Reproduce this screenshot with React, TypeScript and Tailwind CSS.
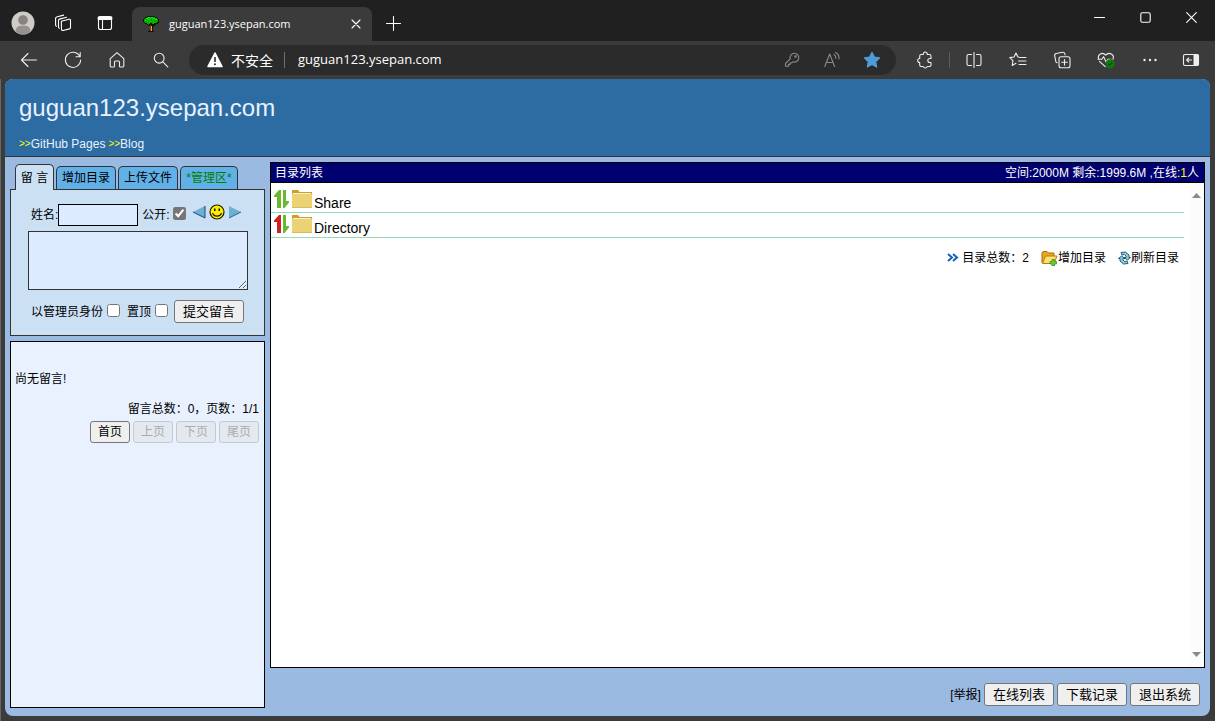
import type { ButtonHTMLAttributes, ReactNode } from "react";

type IconProps = { children: ReactNode; className?: string; size?: number; box?: string };

function Icon({ children, className = "", size = 18, box = "0 0 18 18" }: IconProps) {
  return (
    <svg
      width={size}
      height={size}
      viewBox={box}
      fill="none"
      stroke="currentColor"
      strokeWidth="1.1"
      strokeLinecap="round"
      strokeLinejoin="round"
      className={`shrink-0 ${className}`}
      aria-hidden="true"
    >
      {children}
    </svg>
  );
}

function ToolButton({ label, className = "w-11", children }: { label: string; className?: string; children: ReactNode }) {
  return (
    <button type="button" aria-label={label} className={`flex h-full shrink-0 items-center justify-center ${className}`}>
      {children}
    </button>
  );
}

function TreeIcon() {
  return (
    <svg width="16" height="16" viewBox="0 0 16 16" shapeRendering="crispEdges" className="shrink-0" aria-hidden="true">
      <path fill="#001800" d="M4 0h8v1h2v1h1v1h1v4h-1v1h-2v1h-2v1H5V8H2V7H1V6H0V3h1V2h1V1h2z" />
      <path fill="#00a800" d="M4 1h8v1h2v1h1v3h-1v1h-3v1H9V7H7v1H4V7H2V6H1V3h1V2h2z" />
      <path fill="#20e020" d="M5 1h2v1H5zM8 1h2v1H8zM3 2h2v1H3zM7 2h1v1H7zM10 2h2v1h-2zM2 4h1v1H2zM5 3h2v1H5zM9 3h1v1H9zM12 3h2v1h-2zM4 5h1v1H4zM7 5h1v1H7zM10 5h1v1h-1z" />
      <path fill="#111" d="M4 9h2v1h1v4H6v1H5v1h6v-1h-1v-4h1v-1h1V9h1V8h-2v1h-1v1H8V9H6V8H4z" />
      <path fill="#a33a16" d="M7 9h1v6H7zM5 8h1v1H5z" />
      <path fill="#d6a23c" d="M8 10h1v5H8z" />
    </svg>
  );
}

function BrowserTabs() {
  return (
    <div className="flex h-[41px] shrink-0 items-end bg-[#202020] text-white">
      <div className="flex h-9 items-center">
        <button type="button" aria-label="Profile" className="flex w-[45px] justify-center">
          <svg width="24" height="24" viewBox="0 0 24 24" aria-hidden="true">
            <circle cx="12" cy="12" r="11.5" fill="#cfccc8" />
            <path d="M4.5 20.5C4.500 15.500 8 14.500 12 14.500s7.500 1 7.500 6A11.500 11.500 0 0 1 4.500 20.500z" fill="#96928e" />
            <circle cx="12" cy="9" r="5.200" fill="#87837f" stroke="#cfccc8" strokeWidth=".7" />
          </svg>
        </button>
        <button type="button" aria-label="Workspaces" className="flex w-9 justify-center">
          <Icon>
            <path d="M7.300 7.200 15 5.200a1.200 1.200 0 0 1 1.500 1.200v7.200a1.300 1.300 0 0 1-1 1.300L9 16.500a1.200 1.200 0 0 1-1.500-1.200z" />
            <path d="M5.300 14.300a1.500 1.500 0 0 1-.8-1.300V6.400a1.400 1.400 0 0 1 1-1.300l7-1.900" />
            <path d="M2.400 12.200a1.500 1.500 0 0 1-.8-1.300V4.300a1.400 1.400 0 0 1 1-1.300l7-1.900" />
          </Icon>
        </button>
        <button type="button" aria-label="Tab actions" className="flex w-12 justify-center">
          <Icon size={16} box="0 0 16 16">
            <rect x="1.500" y="1.500" width="13" height="13" rx="2" />
            <path d="M1.500 2.500h13M1.500 4h13" strokeWidth="1.800" />
            <path d="M5.500 4.500v10" />
          </Icon>
        </button>
      </div>
      <div className="ml-[3px] flex h-[34px] w-60 items-center rounded-t-lg bg-[#3b3b3b] pl-[11px] pr-2">
        <TreeIcon />
        <span className="ml-2.5 flex-1 font-['Open_Sans','Noto_Sans',sans-serif] text-[11px]">guguan123.ysepan.com</span>
        <button type="button" aria-label="Close tab" className="flex size-4 items-center justify-center">
          <Icon size={10} box="0 0 10 10">
            <path d="m1 1 8 8M9 1 1 9" />
          </Icon>
        </button>
      </div>
      <button type="button" aria-label="New tab" className="flex h-[34px] w-[42px] items-center justify-center pb-px">
        <Icon size={15} box="0 0 15 15">
          <path d="M7.500 .5v14M.5 7.500h14" />
        </Icon>
      </button>
      <div className="ml-auto flex h-full items-start pr-px">
        <button type="button" aria-label="Minimize" className="flex h-[34px] w-[46px] items-center justify-center">
          <Icon size={11} box="0 0 11 11"><path d="M.5 5.500h10" /></Icon>
        </button>
        <button type="button" aria-label="Maximize" className="flex h-[34px] w-[46px] items-center justify-center">
          <Icon size={11} box="0 0 11 11"><rect x=".8" y=".8" width="9.400" height="9.400" rx="1.500" /></Icon>
        </button>
        <button type="button" aria-label="Close" className="flex h-[34px] w-[46px] items-center justify-center">
          <Icon size={11} box="0 0 11 11"><path d="m.7.7 9.600 9.600m0-9.600L.7 10.300" /></Icon>
        </button>
      </div>
    </div>
  );
}

function BrowserToolbar() {
  return (
    <div className="flex h-[38px] shrink-0 items-center bg-[#3b3b3b] pl-[7px] pr-[5px] text-[#eeeeee]">
      <ToolButton label="Back">
        <Icon><path d="M16.500 9H1.500M8 2.500 1.500 9 8 15.500" /></Icon>
      </ToolButton>
      <ToolButton label="Refresh">
        <Icon><path d="M15.700 5.200A7.600 7.600 0 1 0 16.600 9M16.200 1.500v4.200H12" /></Icon>
      </ToolButton>
      <ToolButton label="Home">
        <Icon><path d="M2.200 7.600 9 1.700l6.800 5.900v7.200a1.200 1.200 0 0 1-1.200 1.200h-2.300a.8.8 0 0 1-.8-.8V11a1 1 0 0 0-1-1h-3a1 1 0 0 0-1 1v4.200a.8.8 0 0 1-.8.8H3.400a1.200 1.200 0 0 1-1.200-1.200z" /></Icon>
      </ToolButton>
      <ToolButton label="Search">
        <Icon><circle cx="7.200" cy="7.200" r="4.900" /><path d="m10.800 10.800 5 5" /></Icon>
      </ToolButton>
      <div className="ml-1.5 flex h-[30px] min-w-0 flex-1 items-center rounded-full bg-[#2b2b2b] pl-[17px] pr-1">
        <svg width="18" height="18" viewBox="0 0 18 18" className="shrink-0" aria-hidden="true">
          <path d="M9 2 16 15.500H2z" fill="#fff" stroke="#fff" strokeWidth="1.600" strokeLinejoin="round" />
          <path d="M9 6v5" stroke="#2b2b2b" strokeWidth="1.600" />
          <circle cx="9" cy="13.200" r="1" fill="#2b2b2b" />
        </svg>
        <span className="ml-[7px] shrink-0 font-['Noto_Sans_CJK_SC',sans-serif] text-sm leading-5 text-white">不安全</span>
        <span className="ml-[11px] mr-[13px] h-4 w-px shrink-0 bg-[#707070]" />
        <input
          aria-label="Address"
          defaultValue="guguan123.ysepan.com"
          className="min-w-0 flex-1 bg-transparent font-['Open_Sans','Noto_Sans',sans-serif] text-[13px] text-white outline-none"
        />
        <ToolButton label="Passwords" className="w-10 text-[#8a8a8a]">
          <Icon size={16} box="0 0 16 16">
            <path d="M10.300 1.300a4.400 4.400 0 1 1-1.500 8.500L7.500 11H6v1.600H4.400v1.600H1.500v-2.700l4.700-4.600a4.400 4.400 0 0 1 4.100-5.600z" />
            <circle cx="11.500" cy="4.500" r=".8" />
          </Icon>
        </ToolButton>
        <ToolButton label="Read aloud" className="w-10 text-[#8a8a8a]">
          <Icon>
            <path d="M1.800 15.500 6.700 3l4.900 12.500M3.400 11.500H10M11 3.500a4 4 0 0 1 1.800 4M12.500 1.500A6.500 6.500 0 0 1 16 8" />
          </Icon>
        </ToolButton>
        <ToolButton label="Favorite" className="w-10 text-[#4f9bd9]">
          <Icon>
            <path fill="currentColor" d="m9 1.200 2.400 4.900 5.300.8-3.900 3.800.9 5.400L9 13.500l-4.700 2.600.9-5.400-3.900-3.800 5.300-.8z" />
          </Icon>
        </ToolButton>
      </div>
      <ToolButton label="Extensions" className="ml-[7px] w-11">
        <Icon>
          <path d="M5.200 3.500h2.100a2 2 0 1 1 3.900 0h2.300A1.500 1.500 0 0 1 15 5v2.500h-1.200a2 2 0 0 0 0 4H15V14a1.500 1.500 0 0 1-1.500 1.500h-2.300a2 2 0 0 1-3.900 0H5.200A1.500 1.500 0 0 1 3.700 14v-2.500a2 2 0 1 1 0-4V5a1.500 1.500 0 0 1 1.500-1.500z" />
        </Icon>
      </ToolButton>
      <span className="mx-0.5 h-4 w-px shrink-0 bg-[#5c5c5c]" />
      <ToolButton label="Split screen">
        <Icon>
          <path d="M6.500 3.500h-3A1.500 1.500 0 0 0 2 5v8a1.500 1.500 0 0 0 1.500 1.500h3M11.500 3.500h3A1.500 1.500 0 0 1 16 5v8a1.500 1.500 0 0 1-1.500 1.500h-3M9 1.500v15" />
        </Icon>
      </ToolButton>
      <ToolButton label="Favorites list">
        <Icon>
          <path d="M10 6.300 8.800 5.800 7 2 5 6l-4.200.6 3.100 3L3.200 14.500 7 12.300M11 6.500h6M9.500 10H17M10 13.500h7" />
        </Icon>
      </ToolButton>
      <ToolButton label="Collections">
        <Icon>
          <path d="M4 11.800a2 2 0 0 1-1.200-1.500L1.700 4.800A2 2 0 0 1 3.300 2.500l6.200-1.200A2 2 0 0 1 11.900 3l.2 1" />
          <rect x="6" y="5.800" width="11" height="11" rx="2" />
          <path d="M11.500 8.500v5.600M8.700 11.300h5.600" />
        </Icon>
      </ToolButton>
      <ToolButton label="Browser essentials">
        <Icon>
          <path d="M1.800 8.200C-.2 3.500 5.500.3 8.700 4.200c3.200-3.900 9.300-.7 7.200 4M2.500 10.300l5.700 5.400M1 8.300h3.800L6.600 5.700l2.700 5.500 1.600-3h3" />
          <circle cx="13.200" cy="12.700" r="4" fill="#0f7b0f" stroke="#0f7b0f" />
          <path d="m11.500 13 1.200 1.100 2.300-2.400" stroke="#063f06" />
        </Icon>
      </ToolButton>
      <ToolButton label="Settings and more">
        <Icon><g fill="currentColor" stroke="none"><circle cx="3.500" cy="9" r="1.200" /><circle cx="9" cy="9" r="1.200" /><circle cx="14.500" cy="9" r="1.200" /></g></Icon>
      </ToolButton>
      <ToolButton label="Sidebar" className="w-[38px]">
        <Icon>
          <rect x="1.500" y="3.500" width="15" height="11" rx="1.500" />
          <path fill="currentColor" stroke="none" d="M11.500 3.500h5v11h-5z" />
          <path d="M9.500 9H4.800M6.700 7 4.700 9l2 2" />
        </Icon>
      </ToolButton>
    </div>
  );
}

function FormButton({ className = "h-[23px] px-2 text-[13px]", ...rest }: ButtonHTMLAttributes<HTMLButtonElement>) {
  return (
    <button
      type="button"
      {...rest}
      className={`flex shrink-0 items-center justify-center whitespace-nowrap rounded-[3px] border border-[#767676] bg-[#efefef] leading-none text-black disabled:border-[#c5cad1] disabled:bg-[#e4e9f0] disabled:text-[#a8acb2] ${className}`}
    />
  );
}

const sideTabs = [
  { label: "增加目录", tone: "text-black", width: "w-[60px]" },
  { label: "上传文件", tone: "text-black", width: "w-[60px]" },
  { label: "*管理区*", tone: "text-[#008000]", width: "w-[58px]" },
];

function Smiley() {
  return (
    <svg width="16" height="16" viewBox="0 0 16 16" aria-hidden="true">
      <circle cx="8" cy="8" r="7" fill="#ffee00" stroke="#1a1a00" strokeWidth="1.200" />
      <path d="M5 4.500h1.500V7H5zM9.500 4.500H11V7H9.500z" fill="#111" />
      <path d="M3.500 9c1.500 4.200 7.500 4.200 9 0" fill="none" stroke="#111" strokeWidth="1.100" />
    </svg>
  );
}

function MessageForm() {
  return (
    <section>
      <div role="tablist" className="flex items-end gap-0.5 pl-[5px]">
        <button type="button" role="tab" aria-selected="true" className="relative -mb-px h-[26px] w-[39px] rounded-t-[5px] border border-b-0 border-[#333333] bg-[#cce0f4]">
          留 言
        </button>
        {sideTabs.map((t) => (
          <button key={t.label} type="button" role="tab" aria-selected="false" className={`h-[23px] rounded-t-[5px] border border-b-0 border-[#333333] bg-[#62b0e8] ${t.width} ${t.tone}`}>
            {t.label}
          </button>
        ))}
      </div>
      <form className="border border-[#333333] bg-[#cce0f4] pb-3 pl-[17px] pr-4 pt-3.5">
        <div className="flex h-[22px] items-center pl-[3px]">
          <label htmlFor="name">姓名:</label>
          <input id="name" className="h-[22px] w-20 border border-black bg-[#dcebff] px-1 outline-none" />
          <label htmlFor="public" className="ml-1">公开:</label>
          <input id="public" type="checkbox" defaultChecked className="mb-1 ml-[3px] size-[13px] accent-[#767676]" />
          <div className="mb-1.5 ml-1.5 flex items-center gap-[3px]">
            <button type="button" aria-label="上一个表情">
              <svg width="14" height="14" viewBox="0 0 14 14" aria-hidden="true"><path d="M13 1v12L1 7z" fill="#6fb0cc" /><path d="M1 7l12 6V1" fill="none" stroke="#17459b" /></svg>
            </button>
            <button type="button" aria-label="选择表情"><Smiley /></button>
            <button type="button" aria-label="下一个表情">
              <svg width="14" height="14" viewBox="0 0 14 14" aria-hidden="true"><path d="M1 1v12l12-6z" fill="#6fb0cc" /><path d="M1 13l12-6" fill="none" stroke="#2a62a8" /></svg>
            </button>
          </div>
        </div>
        <textarea aria-label="留言内容" className="mt-[5px] block h-[59px] w-full border border-[#333333] bg-[#dcebff] outline-none" />
        <div className="mt-2.5 flex items-center pl-[3px]">
          <label htmlFor="admin">以管理员身份</label>
          <input id="admin" type="checkbox" className="mb-0.5 ml-1 size-[13px]" />
          <label htmlFor="top" className="ml-[7px]">置顶</label>
          <input id="top" type="checkbox" className="mb-0.5 ml-1 mr-1.5 size-[13px]" />
          <FormButton>提交留言</FormButton>
        </div>
      </form>
    </section>
  );
}

function MessageList() {
  return (
    <section className="mt-[5px] flex-1 border border-black bg-[#e9f1ff] pl-1 pr-[5px] pt-7">
      <p className="leading-[18px]">尚无留言!</p>
      <p className="mt-3 text-right leading-[18px]">留言总数：0，页数：1/1</p>
      <div className="mt-[3px] flex justify-end gap-[3px]">
        <FormButton className="h-[22px] w-10 text-xs">首页</FormButton>
        <FormButton disabled className="h-[22px] w-10 text-xs">上页</FormButton>
        <FormButton disabled className="h-[22px] w-10 text-xs">下页</FormButton>
        <FormButton disabled className="h-[22px] w-10 text-xs">尾页</FormButton>
      </div>
    </section>
  );
}

function SortIcon({ up }: { up: string }) {
  return (
    <svg width="16" height="20" viewBox="0 0 16 20" className="shrink-0" aria-hidden="true">
      <path d="M5 1h2v18H3V8H0V6.500z" fill={up} />
      <path d="M9 1h3v11h3v1.500L10.500 19H9z" fill="#6ab82f" />
    </svg>
  );
}

function FolderIcon() {
  return (
    <svg width="20" height="18" viewBox="0 0 20 18" className="shrink-0" aria-hidden="true">
      <path d="M0 0h6l1.500 2H20v4H0z" fill="#d39c2c" />
      <path d="M1 3h18v1H1z" fill="#f7efd6" />
      <path d="M0 4h20v14H0z" fill="#ebd272" />
      <path d="M0 17h20v1H0z" fill="#d9bb5c" />
    </svg>
  );
}

const folders = [
  { name: "Share", up: "#6ab82f" },
  { name: "Directory", up: "#cc2222" },
];

function DirectoryPanel() {
  return (
    <section className="flex flex-1 flex-col border border-black bg-white">
      <header className="flex h-5 shrink-0 items-center justify-between border-b border-black bg-[#000070] pl-1 pr-[5px] text-white">
        <h2>目录列表</h2>
        <p>空间:2000M 剩余:1999.6M ,在线:<span className="text-[#ffff00]">1</span>人</p>
      </header>
      <div className="flex flex-1">
        <div className="min-w-0 flex-1 pr-[5px] pt-[5px]">
          <ul>
            {folders.map((f) => (
              <li key={f.name} className="flex h-[25px] border-b border-[#94dcb4] pl-[3px]">
                <span className="pt-px"><SortIcon up={f.up} /></span>
                <span className="ml-0.5 pt-0.5"><FolderIcon /></span>
                <a href="#" className="ml-0.5 self-end text-sm leading-[18px]">{f.name}</a>
              </li>
            ))}
          </ul>
          <div className="mt-[11px] flex h-[18px] items-center justify-end pr-[5px]">
            <svg width="12" height="10" viewBox="0 0 12 10" fill="none" stroke="#1560b8" strokeWidth="2" aria-hidden="true"><path d="m1 1 4 3.500L1 8M6 1l4 3.500L6 8" /></svg>
            <span className="ml-[3px]">目录总数：2</span>
            <button type="button" className="ml-3 flex items-center">
              <svg width="17" height="16" viewBox="0 0 17 16" aria-hidden="true">
                <path d="M1 13V3l1-1.500h4L7.500 3H13v3" fill="#e8a91e" stroke="#a66d0c" />
                <path d="M1.500 13.500 4.500 6H16l-3 7.500z" fill="#ffe070" stroke="#b57b12" />
                <path d="M11 9.500h2.500v2h2V14h-2v2H11v-2H9v-2.500h2z" fill="#6cc83a" stroke="#2f8a1c" strokeWidth=".7" />
              </svg>
              增加目录
            </button>
            <button type="button" className="ml-3 flex items-center">
              <svg width="13" height="14" viewBox="0 0 13 14" fill="none" stroke="#174f68" strokeWidth=".9" strokeLinejoin="round" aria-hidden="true">
                <path d="M3 1.500 7.500 1 11 4v2.500h1.500L9.500 9 6 6.500h2V5L6.500 3.500 4 4z" fill="#8bcbe0" />
                <path d="M10 12.500 5.500 13 2 10V7.500H.5L3.500 5 7 7.500H5V9l1.500 1.500L9 10z" fill="#8bcbe0" />
              </svg>
              刷新目录
            </button>
          </div>
        </div>
        <div className="flex w-[15px] shrink-0 flex-col items-center justify-between bg-[#fcfcfc] pb-2.5 pt-2.5">
          <button type="button" aria-label="向上滚动"><svg width="9" height="5" viewBox="0 0 9 5" className="block" aria-hidden="true"><path d="M4.500 0 9 5H0z" fill="#8a8a8a" /></svg></button>
          <button type="button" aria-label="向下滚动"><svg width="9" height="5" viewBox="0 0 9 5" className="block" aria-hidden="true"><path d="M4.500 5 9 0H0z" fill="#8a8a8a" /></svg></button>
        </div>
      </div>
    </section>
  );
}

export default function App() {
  return (
    <div className="flex min-h-screen flex-col border-l border-[#666666] bg-[#3b3b3b]">
      <div className="-ml-px flex flex-col">
        <BrowserTabs />
        <BrowserToolbar />
      </div>
      <div className="mb-[5px] ml-1 mr-[5px] flex flex-1 flex-col overflow-hidden rounded-lg bg-[#9bbae1] font-['Liberation_Sans','Noto_Sans_CJK_SC',sans-serif] text-xs leading-[18px] text-black">
        <header className="h-[78px] shrink-0 border-b border-[#333333] bg-[#2c6ca3] pl-3.5 pt-3.5 text-[#e9f1ff]">
          <h1 className="text-2xl leading-[30px]">guguan123.ysepan.com</h1>
          <nav className="mt-3 flex gap-[3px] leading-[18px]">
            <a href="#" className="flex"><span className="text-[10px] text-[#ffff00]">&gt;&gt;</span>GitHub Pages</a>
            <a href="#" className="flex"><span className="text-[10px] text-[#ffff00]">&gt;&gt;</span>Blog</a>
          </nav>
        </header>
        <main className="flex flex-1 gap-[5px] px-[5px]">
          <aside className="flex w-[255px] shrink-0 flex-col pb-2 pt-[7px]">
            <MessageForm />
            <MessageList />
          </aside>
          <div className="flex min-w-0 flex-1 flex-col pt-[5px]">
            <DirectoryPanel />
            <footer className="flex shrink-0 items-center justify-end gap-[3px] pb-2.5 pr-[5px] pt-[15px]">
              <a href="#">[举报]</a>
              <FormButton>在线列表</FormButton>
              <FormButton>下载记录</FormButton>
              <FormButton>退出系统</FormButton>
            </footer>
          </div>
        </main>
      </div>
    </div>
  );
}
